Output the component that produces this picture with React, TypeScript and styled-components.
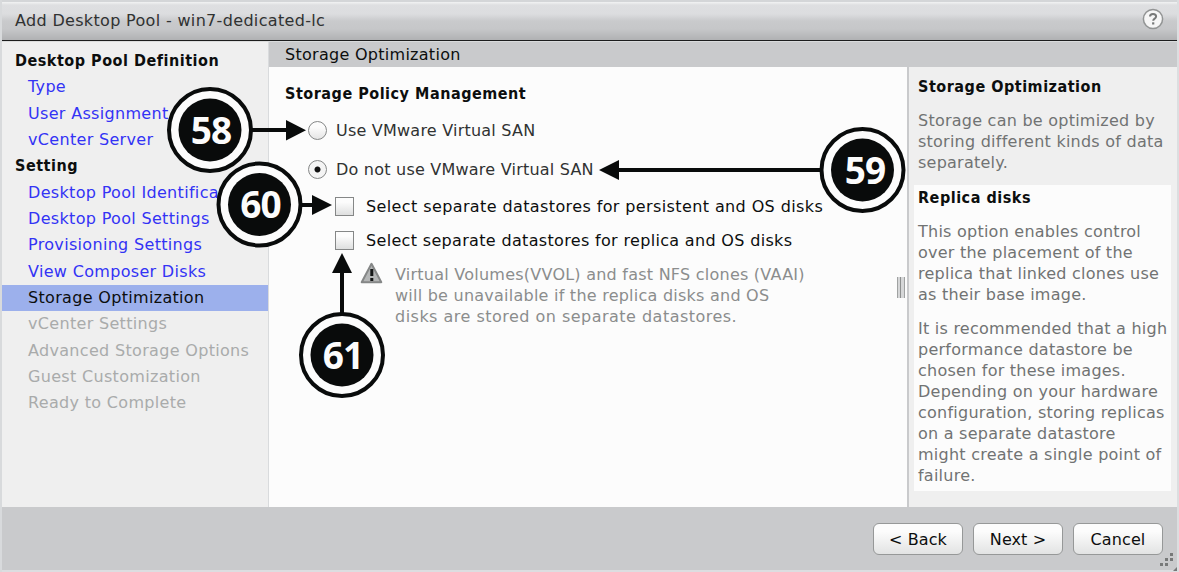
import React from "react";
import styled, { createGlobalStyle, css } from "styled-components";

const GlobalStyle = createGlobalStyle`
  * { box-sizing: border-box; }
  body {
    margin: 0;
    font-family: "DejaVu Sans", Verdana, sans-serif;
    font-size: 16px;
    letter-spacing: 0.24px;
    color: #0c0e0e;
  }
`;

const boldText = css`
  font-family: "DejaVu Sans Condensed", "DejaVu Sans", sans-serif;
  font-stretch: condensed;
  font-weight: bold;
  letter-spacing: 0.52px;
`;

const Dialog = styled.div`
  position: relative;
  width: 1179px;
  height: 572px;
  display: flex;
  flex-direction: column;
  overflow: hidden;
  background: #c9cacc;
  border-left: 2px solid #d8dadc;
  border-right: 2px solid #dcdee0;
  white-space: nowrap;
`;

const TitleBar = styled.header`
  height: 41px;
  flex: none;
  display: flex;
  align-items: center;
  justify-content: space-between;
  padding: 0 13px 2px 13px;
  border-top: 2px solid #d4d6d8;
  border-bottom: 1px solid #1c1d1d;
  background: linear-gradient(#f2f3f3 0, #dedfe1 3px, #dcdddf 12px, #c9cacc 19px, #c6c7c9 27px, #b0b1b3 38px);
`;

const Title = styled.h1`
  margin: 0;
  font-size: 16px;
  font-weight: normal;
  letter-spacing: 0.33px;
  color: #303232;
`;

const HelpIcon = styled.svg`
  width: 22px;
  height: 22px;
  margin-top: -2px;
`;

const Body = styled.div`
  flex: none;
  height: 466px;
  display: flex;
`;

const Sidebar = styled.nav`
  width: 267px;
  flex: none;
  padding-top: 6px;
  background: #efefef;
  border-right: 1px solid #d9dbdd;
  border-top: 1px solid #dcdddd;
`;

const NavHeading = styled.div`
  ${boldText}
  height: 26.33px;
  line-height: 26.33px;
  padding-left: 13px;
`;

const NavItem = styled.div<{ $state?: "active" | "disabled" }>`
  height: 26.33px;
  line-height: 26.33px;
  padding-left: 26px;
  letter-spacing: 0.32px;
  color: ${(p) => (p.$state === "active" ? "#0c0e0e" : p.$state === "disabled" ? "#a9abab" : "#3333f5")};
  background: ${(p) => (p.$state === "active" ? "#9cb0ec" : "transparent")};
`;

const Main = styled.div`
  flex: 1;
  display: flex;
  flex-direction: column;
`;

const SectionBar = styled.div`
  height: 26px;
  flex: none;
  padding-left: 16px;
  line-height: 25px;
  letter-spacing: 0.28px;
  background: #c9cacc;
  border-top: 1px solid #d9dbdc;
`;

const Columns = styled.div`
  flex: 1;
  display: flex;
`;

const Form = styled.section`
  flex: 1;
  padding: 16px 0 0 16px;
  background: #fcfcfc;
`;

const FormHeading = styled.h2`
  ${boldText}
  margin: 0;
  font-size: 16px;
  line-height: 22px;
`;

const Option = styled.label<{ $indent?: boolean; $height: number; $tracking?: number }>`
  display: flex;
  align-items: center;
  height: ${(p) => p.$height}px;
  padding-left: ${(p) => (p.$indent ? 50 : 23)}px;
  gap: ${(p) => (p.$indent ? 12 : 9)}px;
  letter-spacing: ${(p) => p.$tracking ?? 0.22}px;
  color: ${(p) => (p.$indent ? "#0c0e0e" : "#303232")};
`;

const Options = styled.div`
  padding-top: 5px;
`;

const Radio = styled.span<{ $on?: boolean }>`
  width: 19px;
  height: 19px;
  border: 1.5px solid #858787;
  border-radius: 50%;
  background: ${(p) =>
    p.$on
      ? "radial-gradient(circle, #111 0 2.6px, #f4f4f4 3.4px)"
      : "linear-gradient(#fcfcfc 30%, #e5e5e5)"};
`;

const Check = styled.span`
  width: 19px;
  height: 19px;
  border: 1.5px solid #858787;
  background: linear-gradient(#fcfcfc 25%, #dedfdf);
`;

const Notice = styled.div`
  display: flex;
  gap: 12px;
  padding: 7px 0 0 75px;
  line-height: 21px;
  color: #8b8d8d;
`;

const NoticeEnd = styled.div`
  letter-spacing: 0.48px;
`;

const WarningIcon = styled.svg`
  width: 23px;
  height: 23px;
  margin-top: -2px;
`;

const Splitter = styled.div`
  width: 10px;
  flex: none;
  background: #fcfcfc;
`;

const Grip = styled.div`
  width: 8px;
  height: 21px;
  margin-top: 210px;
  border: solid #a0a2a2;
  border-width: 0 1px 0 1px;
  background: linear-gradient(90deg, #d6d7d8 0 2px, #8d8f8f 2px 3px, #d6d7d8 3px);
`;

const Help = styled.aside`
  width: 270px;
  flex: none;
  padding: 8px 0 0 5px;
  line-height: 21px;
  color: #717373;
  background: #efefef;
  border-left: 2px solid #c9cacc;
`;

const HelpHeading = styled.h3`
  ${boldText}
  margin: 0 0 13px;
  padding-top: 1px;
  font-size: 16px;
  line-height: 21px;
  color: #0c0e0e;
`;

const HelpText = styled.div`
  margin: 0 0 13px;
`;

const HelpIntro = styled.div`
  height: 110px;
  padding-left: 4px;
`;

const HelpCard = styled.div`
  width: 257px;
  height: 306px;
  padding: 1px 0 0 4px;
  background: #fcfcfc;
`;

const Footer = styled.footer`
  position: relative;
  flex: 1;
  display: flex;
  justify-content: flex-end;
  gap: 10px;
  padding: 16px 14px 0 0;
  background: #c9cacc;
  border-bottom: 2px solid #dcdde0;
`;

const Button = styled.button`
  width: 90px;
  height: 32px;
  padding: 0;
  font: inherit;
  letter-spacing: 0.1px;
  color: #0c0e0e;
  border: 1.5px solid #969898;
  border-radius: 6px;
  background: linear-gradient(#fcfcfc 25%, #e2e3e3);
`;

const ResizeGrip = styled.svg`
  position: absolute;
  right: 0;
  bottom: -1px;
  width: 20px;
  height: 20px;
`;

const Callouts = styled.svg`
  position: absolute;
  inset: 0 auto auto -2px;
  width: 1179px;
  height: 572px;
  pointer-events: none;
  fill: #090b0b;

  text {
    font: bold 37px "Open Sans", "Noto Sans", sans-serif;
    letter-spacing: -0.8px;
    fill: #fcfcfc;
    text-anchor: middle;
  }
`;

const callouts = [
  { n: 58, x: 210, y: 130, tx: 211, line: "M252 128h34v-8l20 10.300-20 10.300v-8.600h-34z" },
  { n: 60, x: 259.5, y: 204.5, tx: 260.5, line: "M301 203h11v-8l20 10-20 10v-8h-11z" },
  { n: 59, x: 862.5, y: 170, tx: 865, line: "M821 168h-202v-8l-20 10 20 10v-8h202z" },
  { n: 61, x: 342, y: 355, tx: 343, line: "M340 314v-41h-8l10-20 10 20h-8v41z" },
];

const nav: { label: string; kind?: "heading" | "active" | "disabled" }[] = [
  { label: "Desktop Pool Definition", kind: "heading" },
  { label: "Type" },
  { label: "User Assignment" },
  { label: "vCenter Server" },
  { label: "Setting", kind: "heading" },
  { label: "Desktop Pool Identifica" },
  { label: "Desktop Pool Settings" },
  { label: "Provisioning Settings" },
  { label: "View Composer Disks" },
  { label: "Storage Optimization", kind: "active" },
  { label: "vCenter Settings", kind: "disabled" },
  { label: "Advanced Storage Options", kind: "disabled" },
  { label: "Guest Customization", kind: "disabled" },
  { label: "Ready to Complete", kind: "disabled" },
];

function Lines({ of }: { of: string[] }) {
  return (
    <>
      {of.map((line) => (
        <div key={line}>{line}</div>
      ))}
    </>
  );
}

export default function App() {
  return (
    <>
      <GlobalStyle />
      <Dialog>
        <TitleBar>
          <Title>Add Desktop Pool - win7-dedicated-lc</Title>
          <HelpIcon viewBox="0 0 22 22">
            <circle cx="11" cy="11" r="9.600" fill="#f6f6f6" stroke="#929494" strokeWidth="1.500" />
            <path d="M8 8.600C8 6.800 9.200 6 11 6s3.100.9 3.100 2.500c0 2.200-2.900 2.100-2.900 4.300" fill="none" stroke="#777979" strokeWidth="2" />
            <rect x="10.100" y="14.300" width="2.200" height="2.200" fill="#777979" />
          </HelpIcon>
        </TitleBar>
        <Body>
          <Sidebar>
            {nav.map(({ label, kind }) =>
              kind === "heading" ? (
                <NavHeading key={label}>{label}</NavHeading>
              ) : (
                <NavItem key={label} $state={kind}>{label}</NavItem>
              ),
            )}
          </Sidebar>
          <Main>
            <SectionBar>Storage Optimization</SectionBar>
            <Columns>
              <Form>
                <FormHeading>Storage Policy Management</FormHeading>
                <Options>
                  <Option $height={40}><Radio />Use VMware Virtual SAN</Option>
                  <Option $height={39}><Radio $on />Do not use VMware Virtual SAN</Option>
                  <Option $height={34} $indent $tracking={0.39}><Check />Select separate datastores for persistent and OS disks</Option>
                  <Option $height={34} $indent $tracking={0.33}><Check />Select separate datastores for replica and OS disks</Option>
                </Options>
                <Notice>
                  <WarningIcon viewBox="0 0 23 23">
                    <path d="M11.500 1.800 21.300 20.200H1.700z" fill="#b4b6b6" stroke="#858787" strokeWidth="2" strokeLinejoin="round" />
                    <path d="M10.300 7h3v7h-3zM10.300 16h3v3h-3z" fill="#151717" />
                  </WarningIcon>
                  <div>
                    <Lines of={[
                      "Virtual Volumes(VVOL) and fast NFS clones (VAAI)",
                      "will be unavailable if the replica disks and OS",
                    ]} />
                    <NoticeEnd>disks are stored on separate datastores.</NoticeEnd>
                  </div>
                </Notice>
              </Form>
              <Splitter><Grip /></Splitter>
              <Help>
                <HelpIntro>
                  <HelpHeading>Storage Optimization</HelpHeading>
                  <HelpText>
                    <Lines of={["Storage can be optimized by", "storing different kinds of data", "separately."]} />
                  </HelpText>
                </HelpIntro>
                <HelpCard>
                  <HelpHeading>Replica disks</HelpHeading>
                  <HelpText>
                    <Lines of={["This option enables control", "over the placement of the", "replica that linked clones use", "as their base image."]} />
                  </HelpText>
                  <HelpText>
                    <Lines of={[
                      "It is recommended that a high",
                      "performance datastore be",
                      "chosen for these images.",
                      "Depending on your hardware",
                      "configuration, storing replicas",
                      "on a separate datastore",
                      "might create a single point of",
                      "failure.",
                    ]} />
                  </HelpText>
                </HelpCard>
              </Help>
            </Columns>
          </Main>
        </Body>
        <Footer>
          <Button>&lt; Back</Button>
          <Button>Next &gt;</Button>
          <Button>Cancel</Button>
          <ResizeGrip viewBox="0 0 20 20" fill="#777979">
            <path d="M13 2h3v3h-3zM8 7h3v3H8zM13 7h3v3h-3zM3 12h3v3H3zM8 12h3v3H8zM16 20l4-4v4z" />
          </ResizeGrip>
        </Footer>
        <Callouts>
          {callouts.map((c) => (
            <g key={c.n}>
              <path d={c.line} />
              <circle cx={c.x} cy={c.y} r="41" fill="#fcfcfc" stroke="#090b0b" strokeWidth="4" />
              <circle cx={c.x} cy={c.y} r="31.500" />
              <text x={c.tx} y={c.y + 13.5}>{c.n}</text>
            </g>
          ))}
        </Callouts>
      </Dialog>
    </>
  );
}
